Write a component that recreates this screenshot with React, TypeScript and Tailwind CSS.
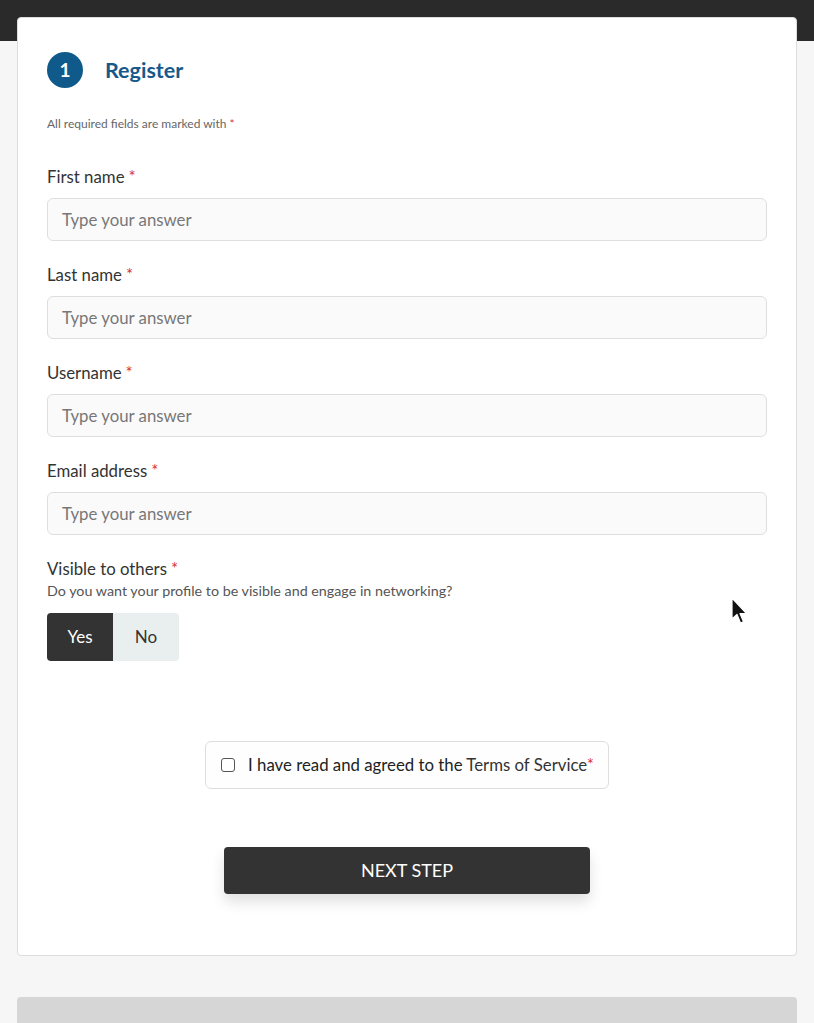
import React, { useState } from 'react';

const fields = ['First name', 'Last name', 'Username', 'Email address'];

const Req = () => <span className="text-[#d9363e] ml-1">*</span>;

export default function App() {
  const [visible, setVisible] = useState(true);
  const [agreed, setAgreed] = useState(false);

  return (
    <div className="relative min-h-[1023px] bg-[#f6f6f6] font-['Lato','Liberation_Sans',sans-serif] text-[#333] overflow-hidden">
      <div className="h-[41px] bg-[#2a2a2a]" />

      <div className="-mt-[24px] mx-[17px] bg-white border border-[#dcdcdc] rounded-[4px] px-[29px] pt-[34px] pb-[61px]">
        {/* Step header */}
        <div className="flex items-center gap-[22px]">
          <div className="w-[36px] h-[36px] rounded-full bg-[#0f5a8b] text-white flex items-center justify-center text-[19px] font-bold">
            1
          </div>
          <h1 className="text-[21.5px] font-bold text-[#17598a]">Register</h1>
        </div>

        <p className="mt-[28px] text-[12px] leading-[16px] text-[#666]">
          All required fields are marked with <span className="text-[#d9363e]">*</span>
        </p>

        <div className="mt-[35px] flex flex-col gap-[24px]">
          {fields.map((f) => (
            <div key={f}>
              <label className="block text-[16.8px] leading-[20px] text-[#333]">
                {f}
                <Req />
              </label>
              <input
                type="text"
                placeholder="Type your answer"
                className="mt-[11px] w-full h-[43px] rounded-[6px] border border-[#dedede] bg-[#fafafa] px-[14px] text-[16.8px] placeholder:text-[#777] outline-none"
              />
            </div>
          ))}
        </div>

        <div className="mt-[24px]">
          <div className="text-[16.8px] leading-[20px]">
            Visible to others
            <Req />
          </div>
          <div className="mt-[2px] text-[14.3px] leading-[20px] text-[#555]">
            Do you want your profile to be visible and engage in networking?
          </div>
          <div className="mt-[12px] flex w-fit rounded-[4px] overflow-hidden">
            <button
              onClick={() => setVisible(true)}
              className={`w-[66px] h-[48px] text-[17px] ${visible ? 'bg-[#333] text-white' : 'bg-[#e9eeee] text-[#333]'}`}
            >
              Yes
            </button>
            <button
              onClick={() => setVisible(false)}
              className={`w-[66px] h-[48px] text-[17px] ${!visible ? 'bg-[#333] text-white' : 'bg-[#e9eeee] text-[#333]'}`}
            >
              No
            </button>
          </div>
        </div>

        <div className="mt-[80px] flex justify-center">
          <label className="flex items-center gap-[13px] h-[48px] pl-[15px] pr-[14px] border border-[#dedede] rounded-[6px] bg-[#fefefe] cursor-pointer">
            <input
              type="checkbox"
              checked={agreed}
              onChange={(e) => setAgreed(e.target.checked)}
              className="w-[14px] h-[14px] appearance-none border border-[#555] rounded-[3px] bg-white checked:bg-[#333]"
            />
            <span className="text-[16.8px] text-[#222]">
              I have read and agreed to the <span className="text-[#333]">Terms of Service</span>
              <span className="text-[#d9363e]">*</span>
            </span>
          </label>
        </div>

        <div className="mt-[58px] flex justify-center">
          <button className="w-[366px] h-[47px] bg-[#333] text-white text-[18px] rounded-[4px] shadow-[0_8px_14px_rgba(0,0,0,0.12)]">
            NEXT STEP
          </button>
        </div>
      </div>

      <div className="mt-[41px] mx-[17px] h-[40px] bg-[#d6d6d6] rounded-t-[4px]" />

      {/* mouse pointer */}
      <svg className="absolute left-[731px] top-[597px]" width="17" height="28" viewBox="0 0 17 28">
        <path d="M1 1 L1 22 L6 17.5 L9.5 26 L12.5 24.7 L9 16.5 L15.5 16.5 Z" fill="#111" stroke="#fff" strokeWidth="1.2" strokeLinejoin="round" />
      </svg>
    </div>
  );
}
